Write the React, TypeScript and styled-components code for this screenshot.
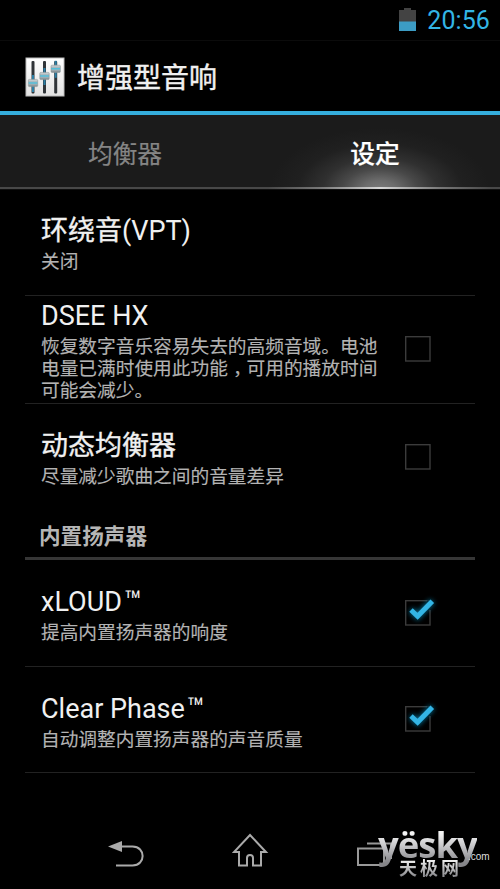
import React from "react";
import styled, { createGlobalStyle } from "styled-components";

const GlobalStyle = createGlobalStyle`
  * { box-sizing: border-box; }
  body { margin: 0; background: #000; overflow: hidden; }
`;

const Screen = styled.div`
  width: 500px;
  height: 889px;
  display: flex;
  flex-direction: column;
  background: #000;
  color: #f0f0f0;
  font-family: Roboto, "Noto Sans CJK SC", sans-serif;
  overflow: hidden;
`;

const StatusBar = styled.header`
  height: 41px;
  flex: none;
  display: flex;
  align-items: center;
  justify-content: flex-end;
  gap: 11px;
  padding: 0 10px 1px 0;
  border-bottom: 1px solid #0b0b0b;
`;

const Clock = styled.span`
  color: #33b5e5;
  font-size: 25px;
  line-height: 38px;
  padding-top: 2px;
  letter-spacing: 0.1px;
`;

const TitleBar = styled.div`
  height: 74px;
  flex: none;
  display: flex;
  align-items: center;
  gap: 12px;
  padding: 2px 25px 0 25px;
  border-bottom: 4px solid #35aedd;
`;

const Title = styled.h1`
  margin: 0;
  padding-top: 3px;
  font-size: 28px;
  line-height: 40px;
  font-weight: 400;
  -webkit-text-stroke: 0.4px currentColor;
`;

const Tabs = styled.nav`
  height: 75px;
  flex: none;
  display: grid;
  grid-template-columns: 1fr 1fr;
  background: #1b1b1b;
  border-bottom: 1px solid #101010;
`;

const Tab = styled.div<{ $active?: boolean }>`
  display: flex;
  align-items: center;
  justify-content: center;
  padding-top: 1px;
  font-size: 24.7px;
  font-weight: ${(p) => (p.$active ? 500 : 400)};
  -webkit-text-stroke: 0.2px currentColor;
  color: ${(p) => (p.$active ? "#fff" : "#858585")};
  border-bottom: 2px solid #484848;
  ${(p) =>
    p.$active &&
    `border-image: linear-gradient(90deg, #484848 8%, #777 28%, #d8d8d8 52%, #777 76%, #484848 96%) 2;
     background: radial-gradient(ellipse 110px 62px at 52% 104%, #7c7c7c 0%, #6c6c6c 15%, #484848 34%, #303030 52%, #202020 75%, #1b1b1b 100%);`}
`;

const List = styled.main`
  flex: none;
  padding: 0 25px;
`;

const Row = styled.section<{ $height: number; $last?: boolean }>`
  height: ${(p) => p.$height}px;
  display: flex;
  align-items: center;
  padding: 0 41px 0 16px;
  border-bottom: ${(p) => (p.$last ? "0" : "1px solid #222")};
`;

const RowText = styled.div`
  width: 348px;
  flex: none;
`;

const RowTitle = styled.div`
  font-size: 27px;
  line-height: 42px;
  margin-top: -1px;
  white-space: nowrap;
`;

const Han = styled.span`
  -webkit-text-stroke: 0.35px currentColor;
`;

const Mark = styled.span`
  margin-left: 2px;
  font-size: 29px;
`;

const Summary = styled.div`
  font-size: 18.7px;
  line-height: 21.7px;
  color: #b3b3b3;
  white-space: nowrap;
  -webkit-text-stroke: 0.15px currentColor;
`;

const Comma = styled.span`
  margin: 0 -5px 0 5px;
`;

const CheckSlot = styled.div`
  margin: -3px 0 0 11px;
  height: 44px;
  flex: none;
  display: flex;
`;

const SectionTitle = styled.h2`
  height: 50px;
  margin: 0;
  padding: 4px 14px 0;
  font-size: 21.6px;
  line-height: 46px;
  font-weight: 700;
  color: #b5b5b5;
  border-bottom: 3px solid #363636;
`;

const NavBar = styled.footer`
  position: relative;
  flex: 1;
  padding: 53px 0 0 107px;
  display: flex;
  align-items: flex-start;
`;

const NavIcon = styled.svg`
  width: 125px;
  height: 50px;
  flex: none;
`;

const Watermark = styled.div`
  position: absolute;
  left: 378px;
  top: 44px;
  width: 116px;
  height: 65px;
`;

const Chrome = styled.span`
  position: absolute;
  white-space: nowrap;
  color: transparent;
  background-clip: text;
  -webkit-background-clip: text;
`;

const Brand = styled(Chrome)`
  left: 0;
  top: 0;
  font: 700 36.5px/54px "Open Sans", sans-serif;
  letter-spacing: -1px;
  background-image: linear-gradient(#f4f4f4 30%, #c4c4c7 55%, #858589 85%);
`;

const Domain = styled(Chrome)`
  left: 90px;
  top: 33px;
  font: 400 10px/14px "Liberation Sans", sans-serif;
  color: #dedede;
`;

const BrandCn = styled(Chrome)`
  left: 21px;
  top: 37px;
  font: 700 18px/26px "Noto Sans CJK SC", sans-serif;
  letter-spacing: 3px;
  background-image: linear-gradient(#eee 25%, #8c8c90 85%);
`;

const Battery = () => (
  <svg width="17" height="26" viewBox="0 0 17 26">
    <path d="M0 3h5V1h7V3h5v21H0z" fill="#434343" />
    <path d="M0 14.500h17V24H0z" fill="#3c9cc4" />
  </svg>
);

const sliders = [
  { x: 8, y: 26 },
  { x: 19.500, y: 19 },
  { x: 30.700, y: 11.800 },
];

const MixerIcon = () => (
  <svg width="40" height="40" viewBox="0 0 40 40">
    <defs>
      <linearGradient id="plate" x2="0" y2="1">
        <stop offset="0" stopColor="#fff" />
        <stop offset="1" stopColor="#e2e2e2" />
      </linearGradient>
      <linearGradient id="knob" x2="0" y2="1">
        <stop offset="0" stopColor="#d8dadb" />
        <stop offset=".35" stopColor="#a4b3b9" />
        <stop offset=".5" stopColor="#35c4e8" />
        <stop offset=".65" stopColor="#a4b3b9" />
        <stop offset="1" stopColor="#7d8588" />
      </linearGradient>
    </defs>
    <rect x="1" y="1" width="38" height="38" fill="url(#plate)" stroke="#bdbdbd" />
    {sliders.map((s) => (
      <g key={s.x}>
        <rect x={s.x - 1.500} y="4" width="3" height="32.500" rx="1" fill="#303438" />
        <rect x={s.x - 1} y={s.y - 8} width="2" height="17" fill="#2c7fa5" />
        <rect x={s.x - 4.700} y={s.y - 3.600} width="9.400" height="7.200" rx="1" fill="url(#knob)" stroke="#8e989b" strokeWidth=".6" />
      </g>
    ))}
  </svg>
);

const CheckBox = ({ checked }: { checked?: boolean }) => (
  <CheckSlot>
    <svg width="44" height="44" viewBox="0 0 44 44">
      <defs>
        <filter id="glow" x="-50%" y="-50%" width="200%" height="200%">
          <feGaussianBlur stdDeviation="2.600" />
        </filter>
      </defs>
      <rect x="5.700" y="10.700" width="24.300" height="24.300" fill="none" stroke="#3b3b3b" strokeWidth="1.400" />
      {checked && (
        <>
          <path d="M27 10.500h5V20h-5z" fill="#000" />
          <path d="M11 20L17.600 26.200 32.300 11.200" fill="none" stroke="#0b86b2" strokeWidth="6" opacity=".8" filter="url(#glow)" />
          <path d="M11 20L17.600 26.200 32.300 11.200" fill="none" stroke="#33b5e5" strokeWidth="5" />
        </>
      )}
    </svg>
  </CheckSlot>
);

type SettingProps = {
  title: React.ReactNode;
  lines: React.ReactNode[];
  height: number;
  checkable?: boolean;
  checked?: boolean;
  last?: boolean;
};

const Setting = ({ title, lines, height, checkable, checked, last }: SettingProps) => (
  <Row $height={height} $last={last}>
    <RowText>
      <RowTitle>{title}</RowTitle>
      {lines.map((line, i) => (
        <Summary key={i}>{line}</Summary>
      ))}
    </RowText>
    {checkable && <CheckBox checked={checked} />}
  </Row>
);

export default function App() {
  return (
    <Screen>
      <GlobalStyle />
      <StatusBar>
        <Battery />
        <Clock>20:56</Clock>
      </StatusBar>
      <TitleBar>
        <MixerIcon />
        <Title>增强型音响</Title>
      </TitleBar>
      <Tabs>
        <Tab>均衡器</Tab>
        <Tab $active>设定</Tab>
      </Tabs>
      <List>
        <Setting title={<><Han>环绕音</Han>(VPT)</>} lines={["关闭"]} height={106} />
        <Setting
          title="DSEE HX"
          lines={[
            "恢复数字音乐容易失去的高频音域。电池",
            <>电量已满时使用此功能<Comma>，</Comma>可用的播放时间</>,
            "可能会减少。",
          ]}
          height={108}
          checkable
        />
        <Setting title={<Han>动态均衡器</Han>} lines={["尽量减少歌曲之间的音量差异"]} height={106} checkable last />
        <SectionTitle>内置扬声器</SectionTitle>
        <Setting title={<>xLOUD<Mark>™</Mark></>} lines={["提高内置扬声器的响度"]} height={107} checkable checked />
        <Setting title={<>Clear Phase<Mark>™</Mark></>} lines={["自动调整内置扬声器的声音质量"]} height={106} checkable checked />
      </List>
      <NavBar>
        <NavIcon viewBox="0 0 125 50">
          <path d="M14 20.500H25.500C39 20.500 39 39.500 25.500 39.500H9" fill="none" stroke="#aaa" strokeWidth="2" />
          <path d="M1 20.500L15 15v11z" fill="#aaa" />
        </NavIcon>
        <NavIcon viewBox="0 0 125 50">
          <path d="M18 9L34 26H29V39.500H21V32Q21 29 18 29T15 32V39.500H7V26H2Z" fill="none" stroke="#aaa" strokeWidth="2" />
        </NavIcon>
        <NavIcon viewBox="0 0 125 50">
          <path d="M1 22.500H27V39H1z M10 17.500H34V33" fill="none" stroke="#999" strokeWidth="2" />
        </NavIcon>
        <Watermark>
          <Brand>yësky</Brand>
          <BrandCn>天极网</BrandCn>
          <Domain>.com</Domain>
        </Watermark>
      </NavBar>
    </Screen>
  );
}
